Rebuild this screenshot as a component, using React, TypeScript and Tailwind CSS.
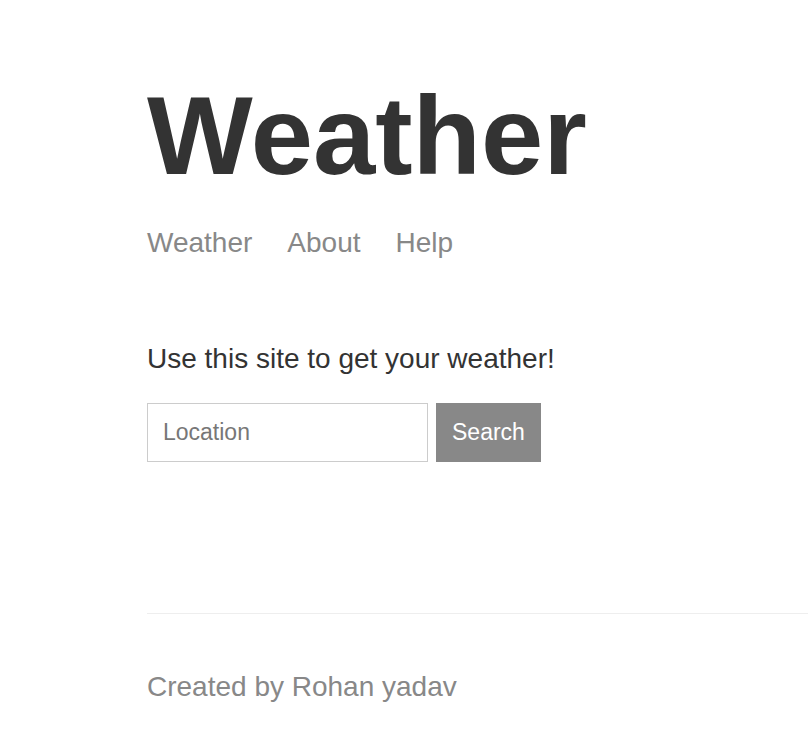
import React from "react";

const App = () => {
  return (
    <div className="min-h-screen bg-white font-['Liberation_Sans',Arial,sans-serif] text-[#333] pl-[147px] pt-[80px]">
      {/* header */}
      <h1 className="text-[112px] leading-[112px] font-bold text-[#333]">Weather</h1>
      <nav className="mt-[37px] flex items-center gap-[35px] text-[28px] leading-[28px] text-[#888]">
        <a href="#">Weather</a>
        <a href="#">About</a>
        <a href="#">Help</a>
      </nav>

      {/* content */}
      <p className="mt-[88px] text-[28px] leading-[28px] text-[#333]">
        Use this site to get your weather!
      </p>
      <form className="mt-[30px] flex gap-[8px]">
        <input
          type="text"
          placeholder="Location"
          className="w-[281px] h-[59px] border border-[#ccc] px-[15px] text-[23px] text-[#333] placeholder:text-[#777] outline-none"
        />
        <button
          type="button"
          className="h-[59px] px-[16px] bg-[#888] text-white text-[23px]"
        >
          Search
        </button>
      </form>

      {/* footer */}
      <footer className="mt-[151px] border-t border-[#eee] pt-[59px]">
        <p className="text-[28px] leading-[28px] text-[#888]">Created by Rohan yadav</p>
      </footer>
    </div>
  );
};

export default App;
